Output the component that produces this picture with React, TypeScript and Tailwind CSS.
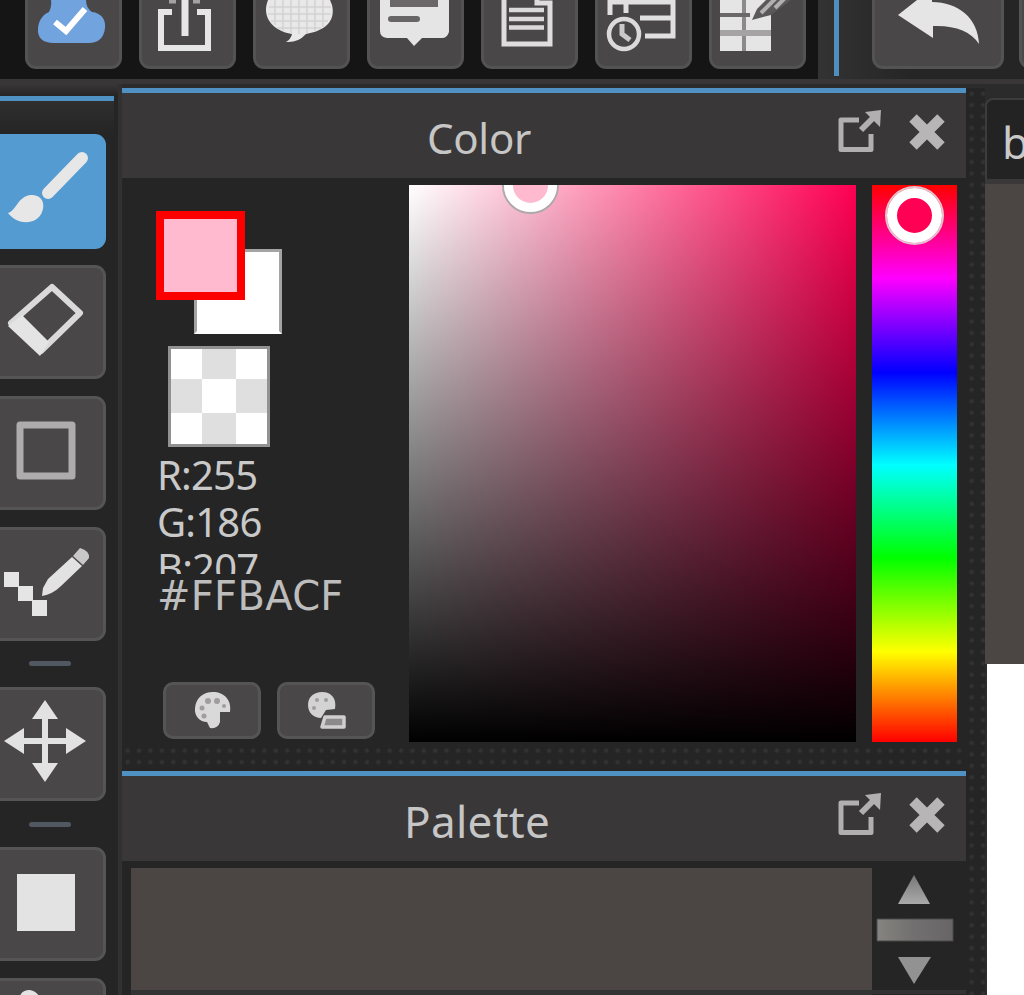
import type { ReactNode } from "react";

const tool =
  "flex h-[114px] w-[106px] shrink-0 items-start rounded-r-[11px] border-[3px] border-l-0 border-[#565555] bg-[#4a4748]";
const dots =
  "bg-[radial-gradient(circle,#343434_1px,transparent_3px)] bg-[length:11.4px_11.4px]";

function TopButton({ children }: { children: ReactNode }) {
  return (
    <div className="h-[69px] w-[97px] shrink-0 rounded-b-[11px] border-[3px] border-t-0 border-[#545353] bg-[#4a4748]">
      <svg className="block h-[66px] w-[91px]" viewBox="3 0 91 66" fill="none">{children}</svg>
    </div>
  );
}

function Tool({ children }: { children?: ReactNode }) {
  return (
    <div className={tool}>
      <svg className="block h-[108px] w-[103px]" viewBox="0 3 103 108" fill="none">{children}</svg>
    </div>
  );
}

function Dash() {
  return <div className="ml-[29px] h-[5px] w-[42px] shrink-0 rounded-sm bg-[#515862]" />;
}

function Header({ title, offset }: { title: string; offset: string }) {
  return (
    <div className="flex h-[90px] w-[844px] shrink-0 border-t-[5px] border-[#4f91c3] bg-[#3a3738]">
      <div className={offset + " w-[440px] text-[#c6c6c6]"}>{title}</div>
      <svg className="ml-auto h-[85px] w-[130px]" viewBox="836 93 130 85" fill="none">
        <path d="M859 120H841V149.500H871V134" stroke="#b1afaf" strokeWidth="5" strokeLinejoin="round" />
        <path d="M861 130l12-12" stroke="#b1afaf" strokeWidth="6" />
        <path d="M865 112l16-2-1 17z" fill="#b1afaf" />
        <path d="M913 118l28 28M941 118l-28 28" stroke="#b7b5b5" strokeWidth="10.500" />
      </svg>
    </div>
  );
}

export default function App() {
  return (
    <div className="flex h-[995px] w-[1024px] flex-col overflow-hidden bg-[#252525] font-['Noto_Sans',sans-serif]">
      <div className="flex h-[79px] shrink-0">
        <div className="flex w-[818px] shrink-0 gap-[17px] bg-[#151515] pl-[25px]">
          <TopButton>
            <path d="M26 0H61Q61 8 67 12C76 13 81 19 80 28C79 38 73 43 64 43H29C18 43 12 38 13 28C14 19 19 14 24 12Q27 6 26 0Z" fill="#71a3df" />
            <path d="M30 22l11 9 19-22" stroke="#fff" strokeWidth="6" />
          </TopButton>
          <TopButton>
            <path d="M33 12H22V48H69V12H58" stroke="#e6e6e6" strokeWidth="6" />
            <path d="M46 0V36" stroke="#e6e6e6" strokeWidth="7" />
            <path d="M30 1h7M54 1h7" stroke="#a3a1a1" strokeWidth="5" />
          </TopButton>
          <TopButton>
            <path d="M15 0C8 17 20 31 39 34Q38 39 33 42Q45 43 53 34C71 31 83 22 79 5L77 0Z" fill="#e8e8e8" />
            <path d="M16 7H78M15 14H78M18 21H75M24 28H68M22 0V25M30 0V31M38 0V34M46 0V34M54 0V33M62 0V31M70 0V27" stroke="#d2d2d2" strokeWidth="1.500" />
          </TopButton>
          <TopButton>
            <path d="M13 0H82V32Q80 38 75 38H55L47 46L40 38H20Q13 37 13 31Z" fill="#e5e5e5" />
            <path d="M23 0H71V7H23Z" fill="#6b6668" />
            <path d="M24 19H50" stroke="#686566" strokeWidth="6" strokeLinecap="round" />
          </TopButton>
          <TopButton>
            <path d="M23 0V44H69V3H56V0" stroke="#dedede" strokeWidth="5" />
            <path d="M28 10H63M28 19H63M28 27.500H63" stroke="#dadada" strokeWidth="4.500" />
          </TopButton>
          <TopButton>
            <path d="M15 15V2H78V36H50M15 2H80M31 0V13M45 18H78" stroke="#e0e0e0" strokeWidth="5" />
            <circle cx="29" cy="34" r="15" fill="#4a4748" stroke="#dadada" strokeWidth="4.500" />
            <path d="M27 24V34L35 40" stroke="#c9c9c9" strokeWidth="5" />
          </TopButton>
          <TopButton>
            <path d="M11 0H62V51H11Z" fill="#e5e5e5" />
            <path d="M35 0V51" stroke="#8c898a" strokeWidth="4" />
            <path d="M11 15H41" stroke="#6b6869" strokeWidth="4" />
            <path d="M11 33H62" stroke="#a5a3a3" strokeWidth="6" />
            <path d="M43 20L48 9L57 0H82L62 15Z" fill="#5b5859" />
            <path d="M52 13L68-3M66 8L79-5" stroke="#b2b0b0" strokeWidth="4" />
          </TopButton>
        </div>
        <div className="flex flex-1 bg-linear-to-r from-[#343333] to-[#252525] to-40%">
          <div className="ml-[16px] h-[76px] w-[5px] shrink-0 bg-[#508fbd]" />
          <div className="ml-[33px] h-[69px] w-[132px] shrink-0 rounded-b-[11px] border-[3px] border-t-0 border-[#545353] bg-[#4a4748]">
            <svg className="h-[66px] w-[126px]" viewBox="875 0 126 66">
              <path d="M898 15L917 0H932V2C958 2 978 18 979 44C971 31 954 25 933 26V38Z" fill="#e5e5e5" />
            </svg>
          </div>
          <div className="ml-[15px] h-[69px] w-10 shrink-0 rounded-bl-[11px] border-b-[3px] border-l-[3px] border-[#545353] bg-[#4a4748]" />
        </div>
      </div>
      <div className="h-[5px] shrink-0 bg-[#383636]" />

      <div className="flex h-[911px] shrink-0">
        <div className="flex w-[122px] shrink-0 flex-col border-r-[4px] border-[#313131] bg-[#252525]">
          <div className="h-[12px] shrink-0 bg-linear-to-b from-[#383636] to-[#262525]" />
          <div className="h-[5px] w-[114px] shrink-0 bg-[#4f91c3]" />
          <div className="h-[33px] w-[114px] shrink-0 bg-linear-to-b from-[#302f2f] to-[#252525]" />
          <div className="h-[115px] w-[106px] shrink-0 rounded-r-[11px] bg-[#549bd2]">
            <svg className="h-[115px] w-[106px]" viewBox="0 134 106 115">
              <path d="M48 193L82 158" stroke="#e7e7e7" strokeWidth="12" strokeLinecap="round" />
              <path d="M8 213C16 211 18 196 31 195C41 194 46 203 42 212C37 225 18 226 8 213Z" fill="#e7e7e7" />
            </svg>
          </div>
          <div className="h-[16px] shrink-0" />
          <Tool>
            <path d="M52 22L80 48L41 86L11 58Z" stroke="#dadada" strokeWidth="6" strokeLinejoin="round" />
            <path d="M22 50L49 77L40 91L8 61Z" fill="#e4e4e4" />
          </Tool>
          <div className="h-[17px] shrink-0" />
          <Tool><path d="M20 29H72V80H20Z" stroke="#aeacac" strokeWidth="7" strokeLinejoin="round" /></Tool>
          <div className="h-[17px] shrink-0" />
          <Tool>
            <path d="M4 45H19V59H33V73H47V89H32V74H18V60H4Z" fill="#e5e5e5" />
            <path d="M42 69L43 61L48 52L72 30L82 39L61 59Q53 67 42 69Z" fill="#e2e2e2" />
            <path d="M73 29L80 21Q90 24 89 31L83 38Z" fill="#c8c8c8" />
          </Tool>
          <div className="h-[20px] shrink-0" />
          <Dash />
          <div className="h-[21px] shrink-0" />
          <Tool>
            <path d="M45 22V87M13 54H77" stroke="#e2e2e2" strokeWidth="6" />
            <path d="M45 13L58 32H32ZM45 95L58 76H32ZM4 54L24 41V67ZM86 54L66 41V67Z" fill="#e2e2e2" />
          </Tool>
          <div className="h-[21px] shrink-0" />
          <Dash />
          <div className="h-[20px] shrink-0" />
          <Tool><path d="M17 27H75V84H17Z" fill="#e3e3e3" /></Tool>
          <div className="h-[17px] shrink-0" />
          <Tool><path d="M20 18Q22 12 30 12Q36 13 39 18Z" fill="#e3e3e3" /></Tool>
        </div>

        <div className="flex w-[863px] shrink-0 flex-col bg-[#252525]">
          <div className="h-[4px] shrink-0 bg-[#2c2c2c]" />
          <div className="flex">
            <div className="w-[844px] shrink-0">
              <Header title="Color" offset="pl-[305px] pt-[15px] text-[42px] leading-[60px] tracking-[-0.3px]" />
              <div className="flex h-[567px] pt-[7px]">
                <div className="w-[287px] shrink-0 pl-[34px] pt-[26px]">
                  <div className="flex">
                    <div className="z-10 h-[89px] w-[89px] border-[8px] border-[#fc0000] bg-[#ffbacf]" />
                    <div className="mt-[38px] -ml-[51px] h-[85px] w-[88px] border-[3px] border-[#a4a4a4] border-b-white bg-white" />
                  </div>
                  <div className="mt-[12px] ml-[12px] grid h-[101px] w-[102px] grid-cols-[31px_34px_31px] grid-rows-[30px_34px_31px] border-[3px] border-[#929292] bg-white">
                    {Array.from({ length: 9 }, (_, i) => (
                      <div key={i} className={i % 2 ? "bg-[#dfdfdf]" : "bg-white"} />
                    ))}
                  </div>
                  <div className="mt-[5px] h-[122px] overflow-hidden pl-px text-[40px] leading-[46.500px] tracking-[-0.8px] text-[#c9c9c9]">
                    <div>R:255</div><div>G:186</div><div>B:207</div>
                  </div>
                  <div className="-mt-[2px] h-[49px] pl-px font-['DejaVu_Sans',sans-serif] text-[40px] leading-[49px] tracking-[0.3px] text-[#bdbdbd]">#FFBACF</div>
                  <div className="mt-[61px] ml-[7px] flex gap-[16px]">
                    <div className="h-[57px] w-[98px] rounded-[10px] border-[3px] border-[#565555] bg-[#4a4748]">
                      <svg className="h-[51px] w-[92px]" viewBox="166 685 92 51">
                        <path d="M213 692C224 692 232 700 230 712H220V722Q218 729 210 728L207 722C200 722 194 716 195 708C196 698 203 692 213 692Z" fill="#d9d9d9" />
                        <g fill="#a09d9d"><circle cx="208" cy="701" r="3" /><circle cx="217" cy="701" r="3" /><circle cx="202" cy="708" r="2.500" /><circle cx="204" cy="716" r="2.500" /><circle cx="224" cy="706" r="2" /></g>
                      </svg>
                    </div>
                    <div className="h-[57px] w-[98px] rounded-[10px] border-[3px] border-[#565555] bg-[#4a4748]">
                      <svg className="h-[51px] w-[92px]" viewBox="280 685 92 51">
                        <path d="M322 692C331 692 337 698 335 709L326 710L321 718C314 718 308 713 308 705C308 697 314 692 322 692Z" fill="#d3d3d3" />
                        <g fill="#a09d9d"><circle cx="317" cy="700" r="2" /><circle cx="326" cy="700" r="2" /><circle cx="314" cy="708" r="2" /></g>
                        <path d="M325 717H344V727H322Z" fill="#8d8a8b" stroke="#cfcfcf" strokeWidth="3.500" strokeLinejoin="round" />
                      </svg>
                    </div>
                  </div>
                </div>
                <div className="relative h-[557px] w-[447px] shrink-0 overflow-hidden bg-[linear-gradient(to_bottom,transparent,#000),linear-gradient(to_right,#fff,#ff0054)]">
                  <div className="absolute -top-[28px] left-[93px] h-[57px] w-[57px] rounded-full border-[2px] border-[#aaa]">
                    <div className="h-full w-full rounded-full border-[9px] border-white bg-[#ffbacf]" />
                  </div>
                </div>
                <div className="relative ml-[16px] h-[557px] w-[85px] shrink-0 bg-[linear-gradient(to_bottom,#f00,#f0f_16.7%,#00f_33.7%,#0ff_50.3%,#0f0_66.9%,#ff0_83.8%,#f00)]">
                  <div className="absolute top-px left-[13px] h-[59px] w-[59px] rounded-full border-[2px] border-[#e3c4cc]">
                    <div className="h-full w-full rounded-full border-[10px] border-white bg-[#ff0054]" />
                  </div>
                </div>
              </div>
              <div className={"h-[26px] " + dots} />
              <Header title="Palette" offset="pl-[282px] pt-[15px] text-[44px] leading-[60px] tracking-[0.3px]" />
              <div className="flex h-[134px] pt-[7px]">
                <div className="ml-[9px] h-[122px] w-[741px] shrink-0 bg-[#4b4643] shadow-[0_5px_0_#343333]" />
                <svg className="h-[127px] w-[94px]" viewBox="872 868 94 127">
                  <defs>
                    <linearGradient id="arrow" x2="0" y2="1"><stop stopColor="#777" /><stop offset="1" stopColor="#aaa" /></linearGradient>
                    <linearGradient id="thumb"><stop stopColor="#858480" /><stop offset=".5" stopColor="#716f6f" /><stop offset="1" stopColor="#686566" /></linearGradient>
                  </defs>
                  <path d="M914 875L930 904H898Z" fill="url(#arrow)" />
                  <path d="M877 919H953V941H877Z" fill="url(#thumb)" stroke="#4c4b4b" strokeWidth="1" />
                  <path d="M898 957H931L914 984Z" fill="#929292" />
                  <path d="M872 992H966" stroke="#343333" strokeWidth="4" />
                </svg>
              </div>
            </div>
            <div className={"w-[19px] shrink-0 " + dots} />
          </div>
        </div>

        <div className="flex w-[39px] shrink-0 flex-col bg-[#2b2b2b] pt-[14px]">
          <div className="h-[81px] shrink-0 rounded-tl-[8px] border-t-2 border-l-2 border-[#3d3b3b] bg-[#232323] pt-[12px] pl-[15px] text-[44px] leading-[60px] text-[#c9c9c9]">b</div>
          <div className="h-[5px] shrink-0 bg-[#3a3838]" />
          <div className="h-[480px] shrink-0 bg-[#4b4643]" />
          <div className="ml-[2px] flex-1 bg-white" />
        </div>
      </div>
    </div>
  );
}
